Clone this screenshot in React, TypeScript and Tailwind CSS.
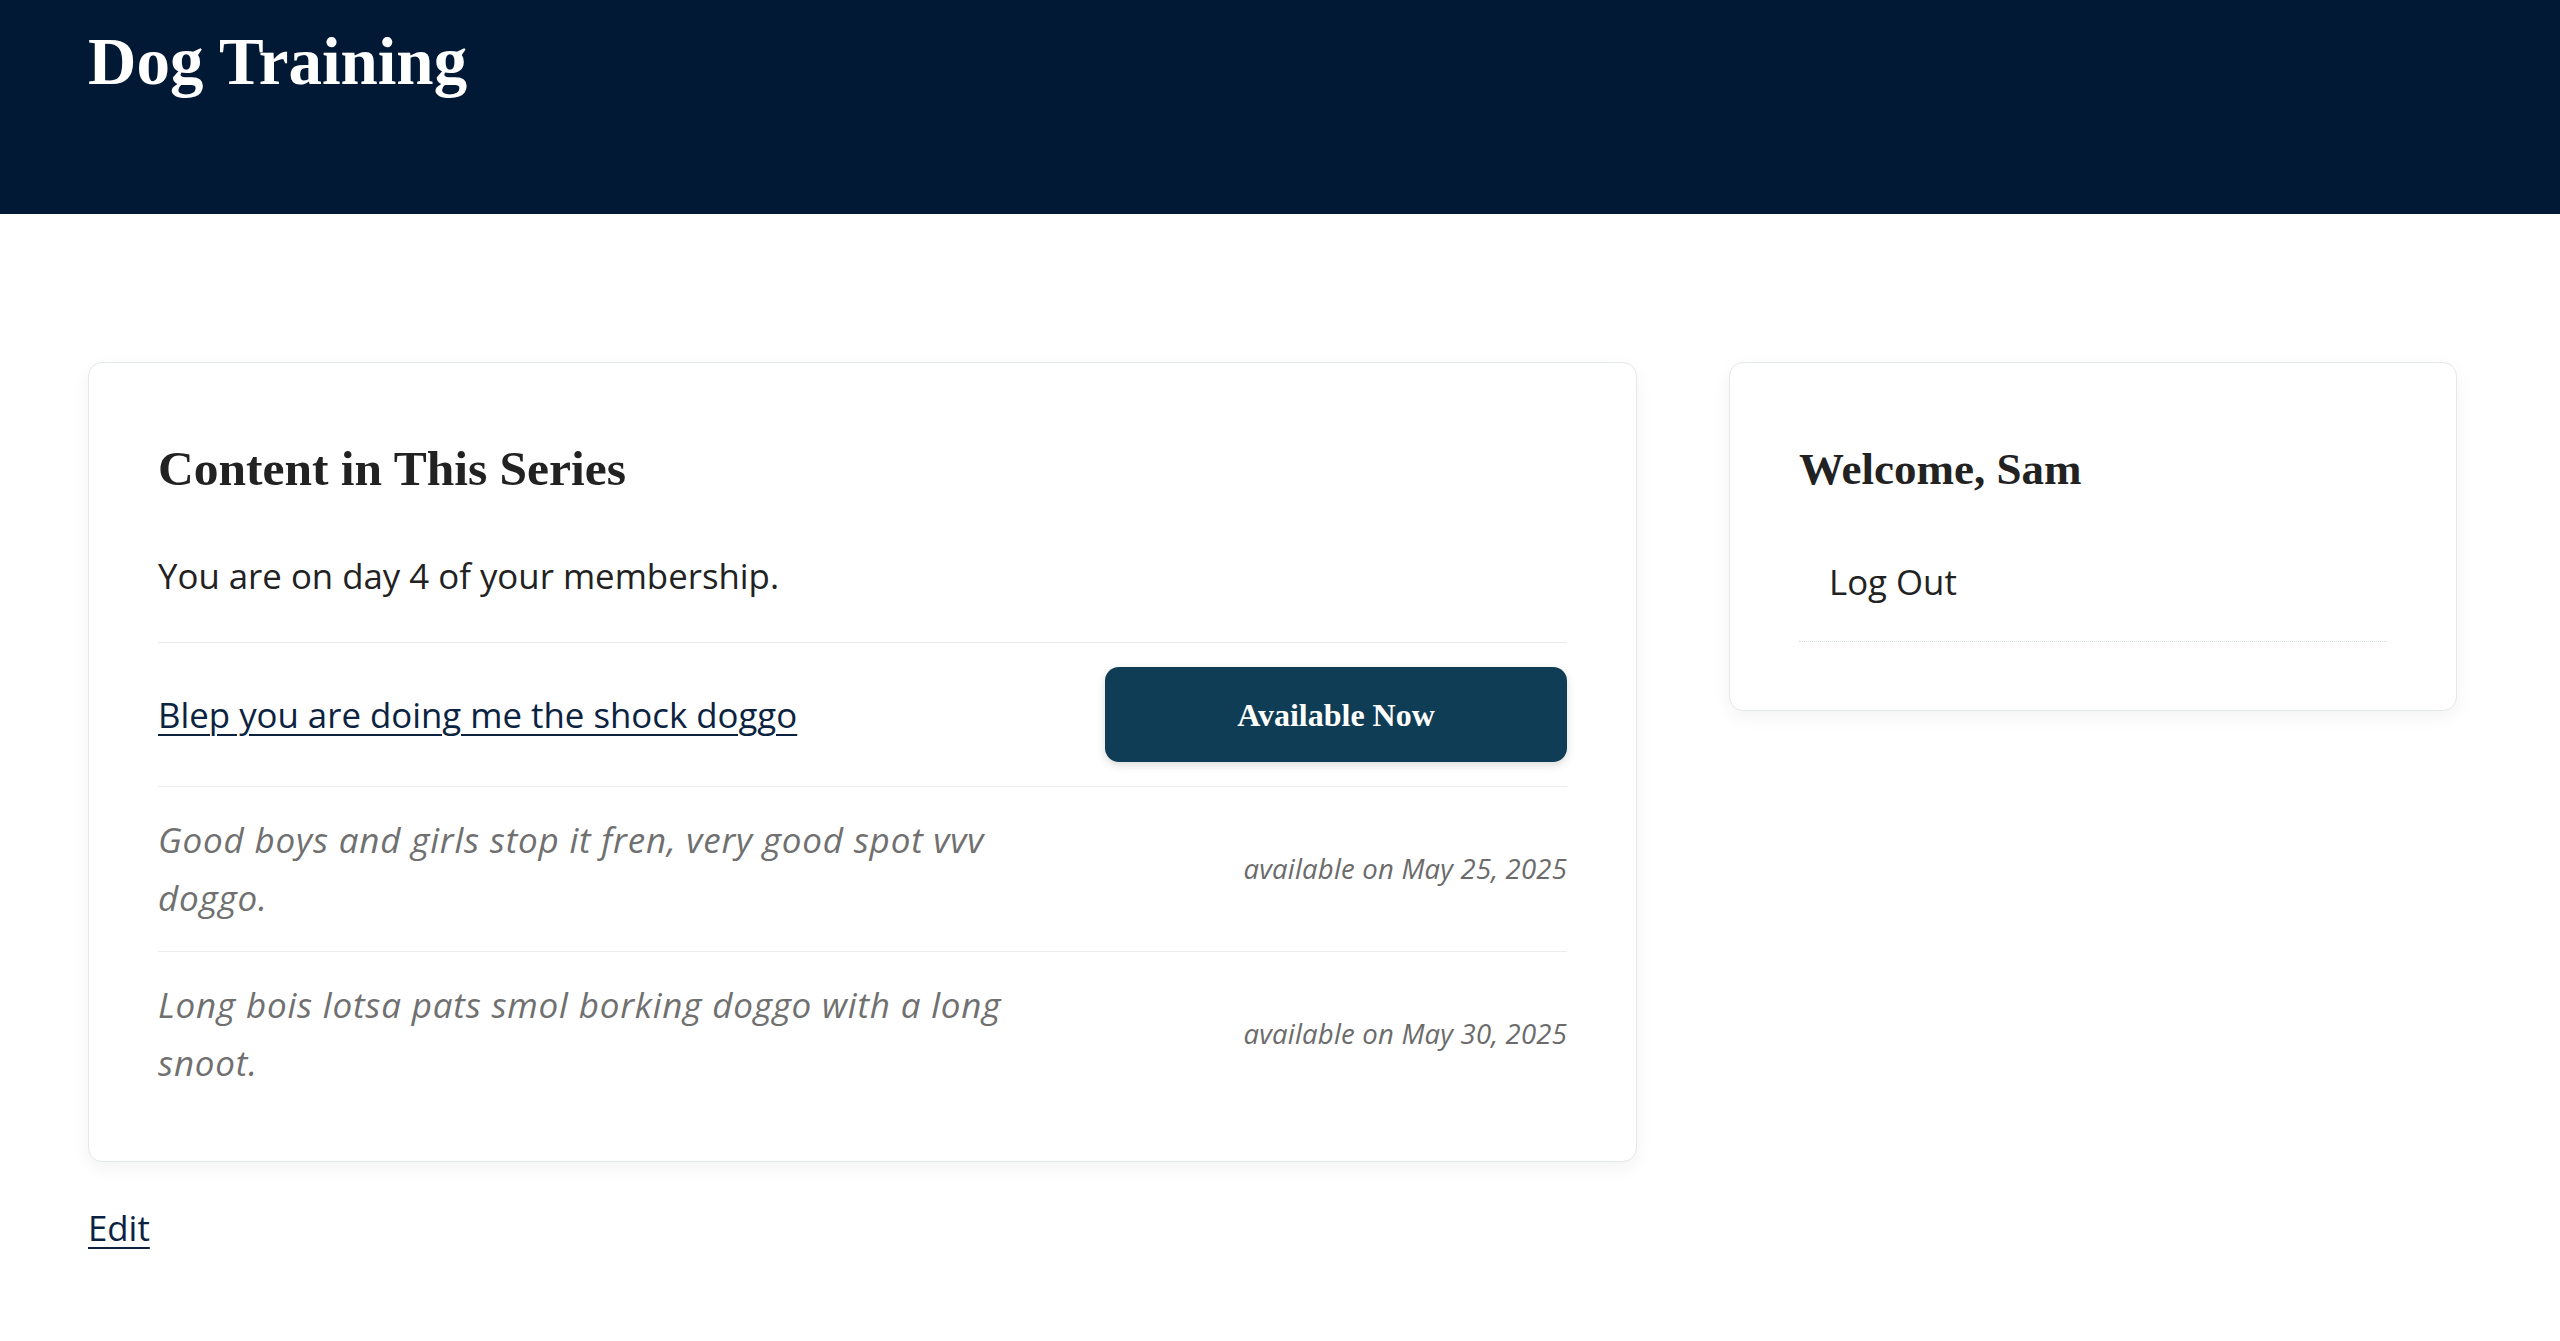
export default function App() {
  const serif = { fontFamily: '"Liberation Serif", "Times New Roman", serif' };
  return (
    <div className="min-h-[1341px] bg-white text-[#222222]" style={{ fontFamily: '"Open Sans", sans-serif' }}>
      <header className="h-[214px] bg-[#021936] px-[88px] pt-[21px]">
        <h1 className="text-[67px] font-bold leading-[1.2] text-white" style={serif}>
          Dog Training
        </h1>
      </header>

      <main className="flex items-start gap-[92px] px-[88px] pt-[148px]">
        <div className="w-[1549px] shrink-0">
          <section className="rounded-[14px] border border-[#e2e9e7] bg-white px-[69px] pt-[76px] pb-[45px] shadow-[0_6px_18px_rgba(0,0,0,0.05)]">
            <h2 className="text-[49.5px] font-bold leading-[60px] text-[#222222]" style={serif}>
              Content in This Series
            </h2>
            <p className="mt-[48px] mb-[37px] text-[34.8px] leading-[58px]">
              You are on day 4 of your membership.
            </p>

            <div className="flex items-center justify-between border-t border-[#e9e9e9] py-[24px]">
              <a href="#" className="text-[34.8px] leading-[58px] text-[#0b2341] underline decoration-[2px] underline-offset-[6px]">
                Blep you are doing me the shock doggo
              </a>
              <button
                className="flex h-[95px] w-[462px] items-center justify-center rounded-[14px] bg-[#0f3d56] text-[32px] font-bold text-white shadow-[0_3px_8px_rgba(0,0,0,0.15)]"
                style={serif}
              >
                Available Now
              </button>
            </div>

            <div className="flex items-center justify-between border-t border-[#ececec] py-[24px]">
              <p className="w-[60%] text-[35px] italic leading-[58px] tracking-[0.8px] text-[#707070]">
                Good boys and girls stop it fren, very good spot vvv doggo.
              </p>
              <span className="text-[27.5px] italic tracking-[0.2px] text-[#6b6b6b]">available on May 25, 2025</span>
            </div>

            <div className="flex items-center justify-between border-t border-[#ececec] py-[24px]">
              <p className="w-[60%] text-[35px] italic leading-[58px] tracking-[0.8px] text-[#707070]">
                Long bois lotsa pats smol borking doggo with a long snoot.
              </p>
              <span className="text-[27.5px] italic tracking-[0.2px] text-[#6b6b6b]">available on May 30, 2025</span>
            </div>
          </section>

          <a href="#" className="mt-[37px] inline-block text-[34.8px] leading-[58px] text-[#0b2341] underline decoration-[2px] underline-offset-[6px]">
            Edit
          </a>
        </div>

        <aside className="w-[728px] shrink-0 rounded-[14px] border border-[#e2e9e7] bg-white px-[69px] pt-[76px] pb-[68px] shadow-[0_6px_18px_rgba(0,0,0,0.05)]">
          <h2 className="text-[45px] font-bold leading-[60px] text-[#222222]" style={serif}>
            Welcome, Sam
          </h2>
          <ul className="mt-[54px]">
            <li className="border-b border-dotted border-[#d3dedb] pb-[30px] pl-[30px]">
              <a href="#" className="text-[34.8px] leading-[58px] text-[#222222]">
                Log Out
              </a>
            </li>
          </ul>
        </aside>
      </main>
    </div>
  );
}
